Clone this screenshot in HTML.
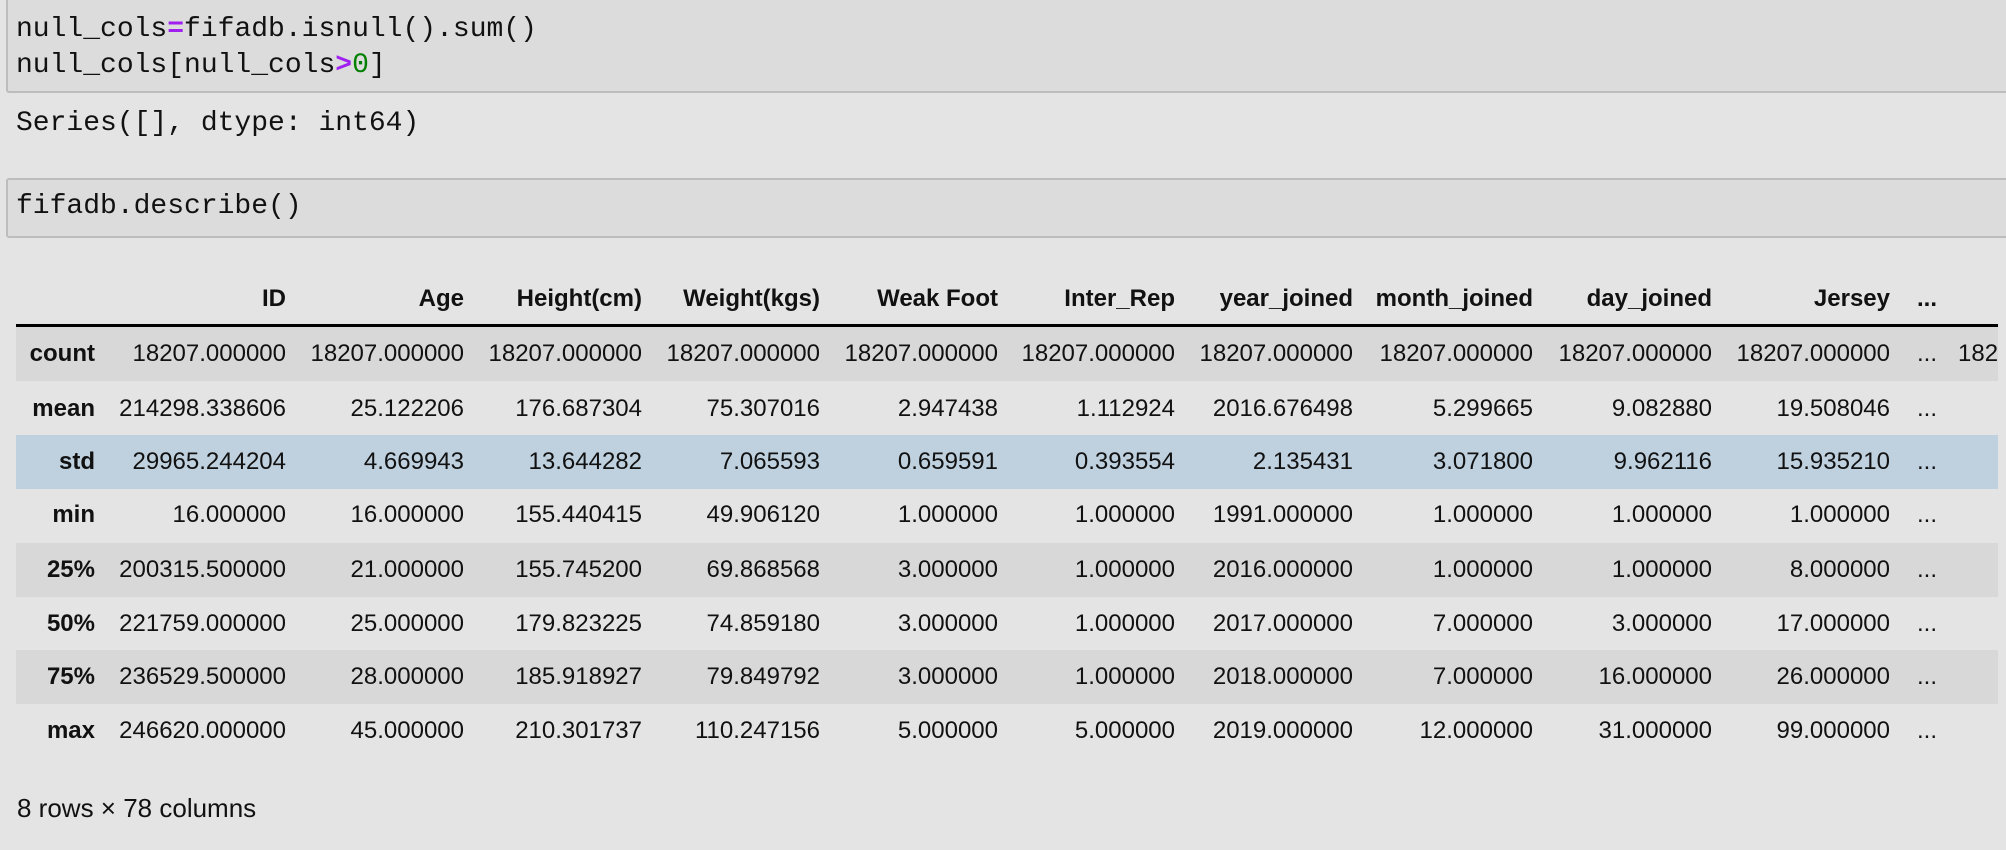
<!DOCTYPE html>
<html><head><meta charset="utf-8"><style>
body{margin:0;width:2006px;height:850px;background:#e4e4e4;overflow:hidden;position:relative;font-family:"Liberation Sans",sans-serif;color:#111}
.cell{position:absolute;left:6px;right:-4px;background:#dcdcdc;border:2px solid #bdbdbd;border-radius:3px}
.mono{font-family:"Liberation Mono",monospace;font-size:28px;color:#111;position:absolute;left:16px;white-space:pre}
.row{position:absolute;left:16px;width:1982px;height:54px;overflow:hidden;white-space:nowrap}
.row span{position:absolute;top:0;line-height:54px;font-size:24px;text-align:right}
.hdr span{font-weight:bold}
</style></head><body>
<div class="cell" style="top:-4px;height:93px"></div>
<div class="mono" style="top:12px;line-height:36px">null_cols<span style="color:#a020f0;font-weight:bold">=</span>fifadb.isnull().sum()
null_cols[null_cols<span style="color:#a020f0;font-weight:bold">&gt;</span><span style="color:#008000">0</span>]</div>
<div class="mono" style="top:106px;line-height:36px">Series([], dtype: int64)</div>
<div class="cell" style="top:178px;height:56px"></div>
<div class="mono" style="top:189px;line-height:36px">fifadb.describe()</div>

<div id="t"></div>
<div style="position:absolute;left:16px;top:324px;width:1982px;height:3px;background:#000"></div>
<div style="position:absolute;left:17px;top:793px;font-size:26px;line-height:30px">8 rows × 78 columns</div>
<script>
const rights=[95,286,464,642,820,998,1175,1353,1533,1712,1890];
const rows=[
["","ID","Age","Height(cm)","Weight(kgs)","Weak Foot","Inter_Rep","year_joined","month_joined","day_joined","Jersey"],
["count","18207.000000","18207.000000","18207.000000","18207.000000","18207.000000","18207.000000","18207.000000","18207.000000","18207.000000","18207.000000"],
["mean","214298.338606","25.122206","176.687304","75.307016","2.947438","1.112924","2016.676498","5.299665","9.082880","19.508046"],
["std","29965.244204","4.669943","13.644282","7.065593","0.659591","0.393554","2.135431","3.071800","9.962116","15.935210"],
["min","16.000000","16.000000","155.440415","49.906120","1.000000","1.000000","1991.000000","1.000000","1.000000","1.000000"],
["25%","200315.500000","21.000000","155.745200","69.868568","3.000000","1.000000","2016.000000","1.000000","1.000000","8.000000"],
["50%","221759.000000","25.000000","179.823225","74.859180","3.000000","1.000000","2017.000000","7.000000","3.000000","17.000000"],
["75%","236529.500000","28.000000","185.918927","79.849792","3.000000","1.000000","2018.000000","7.000000","16.000000","26.000000"],
["max","246620.000000","45.000000","210.301737","110.247156","5.000000","5.000000","2019.000000","12.000000","31.000000","99.000000"]];
const tops=[272,327,382,435,488,543,597,650,704];
const bgs=["transparent","#d8d8d8","transparent","#bfd0de","transparent","#d8d8d8","transparent","#d8d8d8","transparent"];
let h="";
rows.forEach((r,i)=>{
 h+=`<div class="row${i==0?' hdr':''}" style="top:${tops[i]}px;background:${bgs[i]}">`;
 r.forEach((c,j)=>{const rt=rights[j]-16;h+=`<span style="right:${1982-rt}px;${j==0?'font-weight:bold':''}">${c}</span>`;});
 h+=`<span style="left:${1917-16}px;text-align:left;${i==0?'font-weight:bold':''}">...</span>`;
 if(i==1)h+=`<span style="left:${1958-16}px;text-align:left">18207.000000</span>`;
 h+=`</div>`;
});
document.getElementById("t").innerHTML=h;
</script>
</body></html>
